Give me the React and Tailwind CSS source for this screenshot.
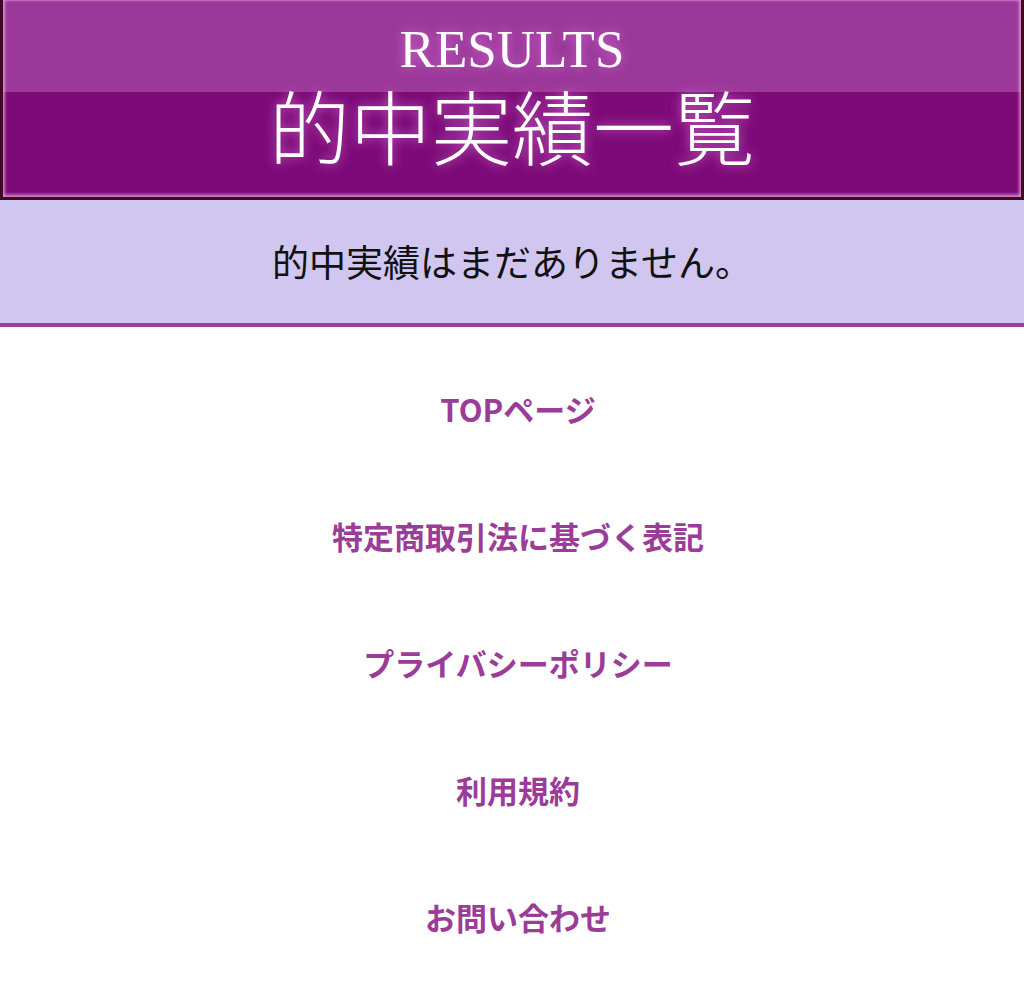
import React from "react";

const links = [
  "TOPページ",
  "特定商取引法に基づく表記",
  "プライバシーポリシー",
  "利用規約",
  "お問い合わせ",
];

export default function App() {
  return (
    <div className="w-full min-h-[994px] bg-white font-['Noto_Sans_CJK_JP',sans-serif]">
      <header className="h-[200px] border-[3px] border-t-0 border-[#3d0a26] bg-[linear-gradient(to_bottom,#9c389a_0,#9c389a_92px,#7c0a77_92px,#7c0a77_100%)] shadow-[inset_0_-2px_3px_1px_rgba(240,170,225,0.55),inset_2px_0_3px_0_rgba(240,170,225,0.55),inset_-2px_0_3px_0_rgba(240,170,225,0.55)] flex flex-col items-center">
        <div className="mt-[22px] h-[54px] text-[53px] leading-[54px] text-white font-['Liberation_Serif',serif] [text-shadow:0_0_12px_rgba(210,110,210,0.95)]">
          RESULTS
        </div>
        <h1 className="mt-[8px] text-[81px] leading-[80px] text-white font-['Noto_Sans_CJK_JP',serif] font-light [text-shadow:0_0_12px_rgba(210,110,210,0.95)]">
          的中実績一覧
        </h1>
      </header>

      <section className="h-[127px] bg-[#d0c6f0] border-b-4 border-[#9b3f9b] flex items-center justify-center">
        <p className="text-[37px] leading-none text-[#111]">的中実績はまだありません。</p>
      </section>

      <nav className="flex flex-col items-center pt-[64px] pl-3 gap-[91px]">
        {links.map((label) => (
          <a
            key={label}
            href="#"
            className="text-[31px] leading-[36px] font-bold text-[#9b3d98]"
          >
            {label}
          </a>
        ))}
      </nav>
    </div>
  );
}
